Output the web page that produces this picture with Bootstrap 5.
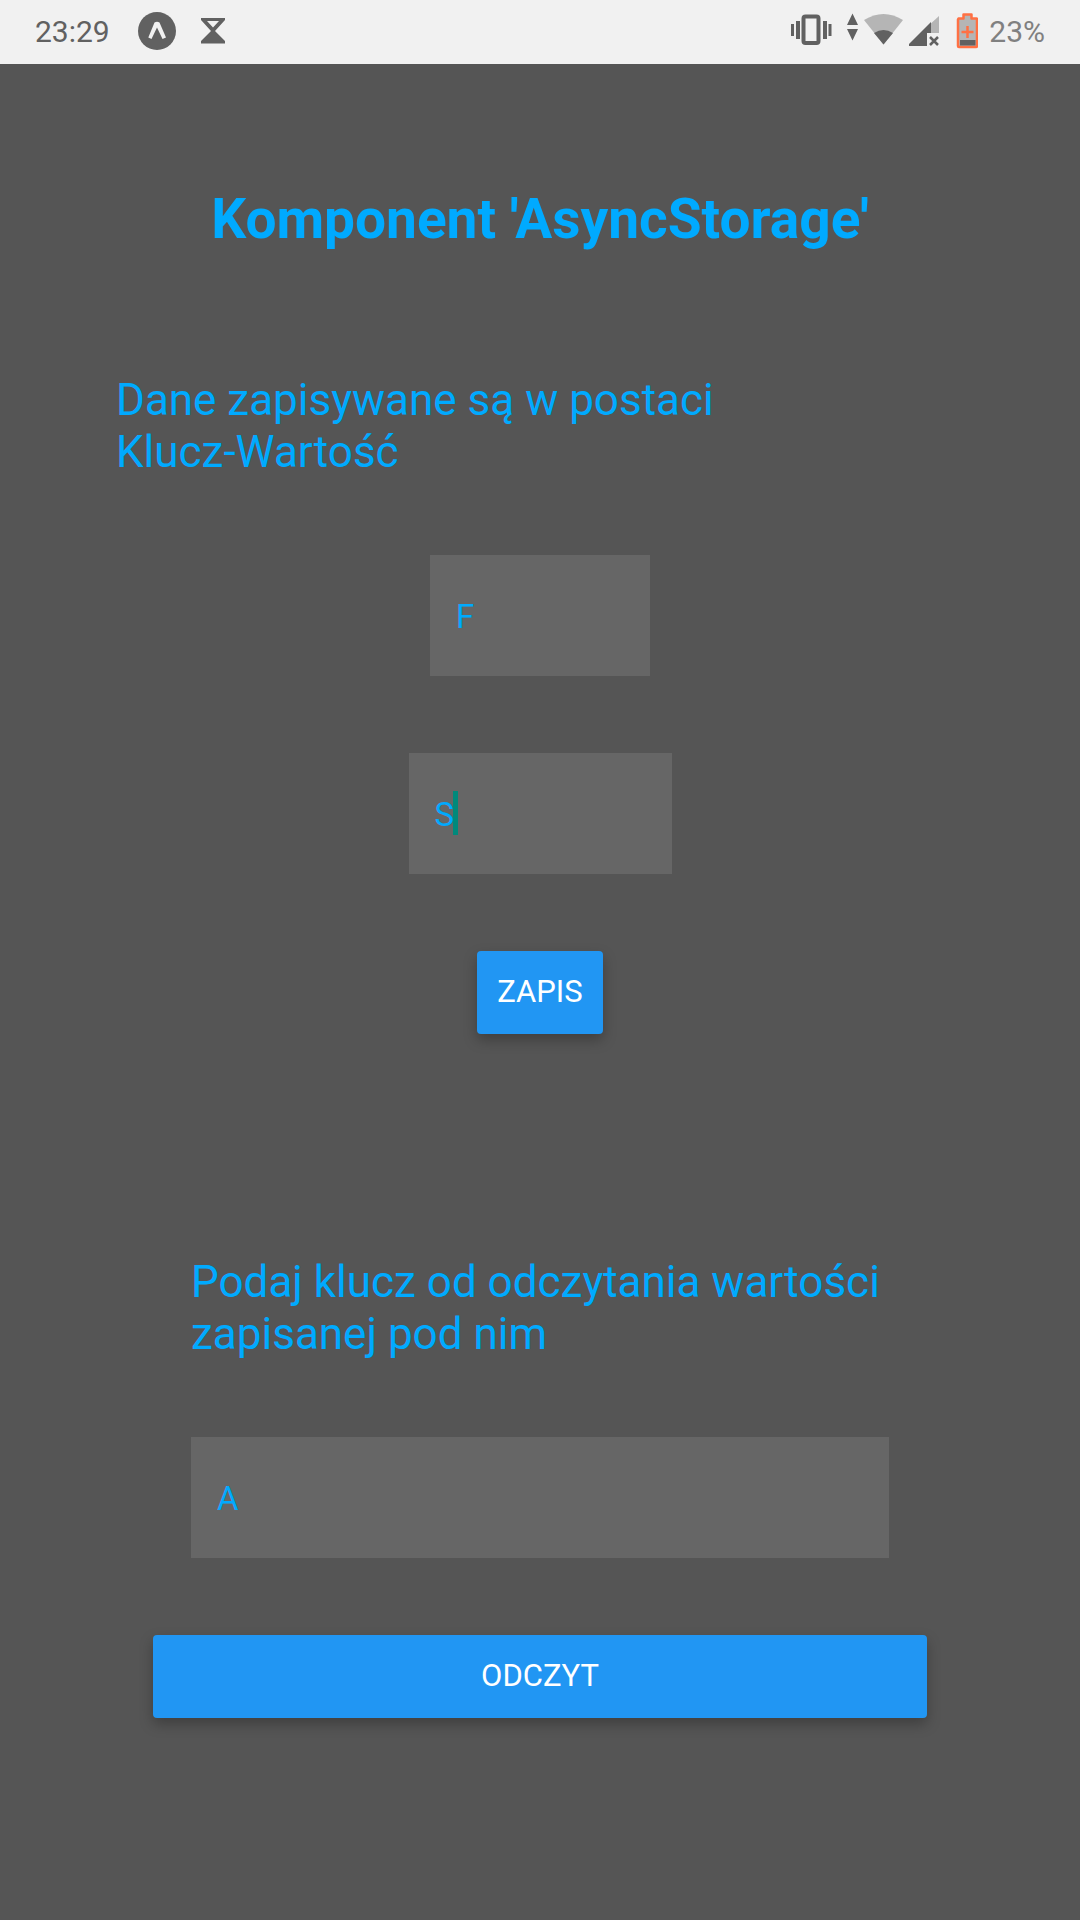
<!DOCTYPE html>
<html lang="pl">
<head>
<meta charset="utf-8">
<meta name="viewport" content="width=device-width, initial-scale=1">
<title>AsyncStorage</title>
<link href="https://cdn.jsdelivr.net/npm/bootstrap@5.3.0/dist/css/bootstrap.min.css" rel="stylesheet">
<style>
  body { background: #555; color: #0af; font-family: Roboto, sans-serif; font-size: 33px; }
  .status-bar { background: #f1f1f1; color: #616161; height: 64px; padding: 0 35px; font-size: 30px; line-height: 64px; }
  .status-bar svg { display: block; }
  .clock { font-weight: 400; }
  .charge { color: #808080; margin-left: 11px; }
  .screen { padding: 123px 24px 77px; }
  .screen-title { font-size: 55px; line-height: 64px; font-weight: 700; margin-bottom: 123px; }
  .hint-text { font-size: 44px; line-height: 52px; margin: 0; }
  .save-form { gap: 77px; max-width: 848px; }
  .read-form { gap: 77px; max-width: 774px; margin-top: 222px; }
  .read-fields { gap: 77px; padding: 0 38px; }
  .field-box { background: #666; color: #0af; border: 0; border-radius: 0; height: 121px; padding: 2px 26px 0; font-size: 33px; }
  .field-box:focus { background: #666; color: #0af; box-shadow: none; }
  .key-field { width: 220px; }
  .value-field { width: 263px; }
  .caret { left: 44px; top: 38px; width: 5px; height: 44px; background: #00897b; }
  .btn-material { --bs-btn-color: #fff; --bs-btn-bg: #2196f3; --bs-btn-hover-color: #fff; --bs-btn-hover-bg: #1e88e5; --bs-btn-border-width: 0;
    height: 83px; padding: 0 20px; border-radius: 4px; font-size: 31px; box-shadow: 0 6px 14px rgba(0,0,0,.27); }
</style>
<script src="https://cdn.jsdelivr.net/npm/bootstrap@5.3.0/dist/js/bootstrap.bundle.min.js"></script>
</head>
<body>
<header class="status-bar d-flex justify-content-between align-items-center">
  <div class="d-flex align-items-center">
    <span class="clock">23:29</span>
    <svg class="ms-4" width="43" height="64" viewBox="134 0 43 64" aria-hidden="true">
      <circle cx="157" cy="31" r="19" fill="#616161"/>
      <path d="M148.300 37.500L154.500 22.500Q157 21 159.500 22.500L166 37.500L162.500 39L157 27.500L151.500 39Z" fill="#f1f1f1"/>
    </svg>
    <svg class="ms-4" width="24" height="64" viewBox="201 0 24 64" aria-hidden="true">
      <path fill="#616161" fill-rule="evenodd" d="M201 18h24v2L215 31l10 10v2.500h-24V41l10-10-10-11zM207 21h12l-6 6.500z"/>
    </svg>
  </div>
  <div class="d-flex align-items-center">
    <svg width="188" height="64" viewBox="790 0 188 64" aria-hidden="true">
      <g fill="#616161">
        <path d="M791 24h3v12h-3zM796 21h4v18h-4zM823 21h4v18h-4zM828.500 24h3v12h-3z"/>
        <rect x="803.500" y="16.500" width="15" height="26.500" rx="2" fill="none" stroke="#616161" stroke-width="4"/>
        <path d="M852.500 13.500L858 25h-11zM847 29h11l-5.500 11.500z"/>
      </g>
      <path fill="#b5b5b5" d="M864 20Q883.500 8 903 20L883.500 44.500z"/>
      <path fill="#616161" d="M874 33Q883.500 27 893 33L883.500 44.500z"/>
      <path fill="#b5b5b5" d="M939 16v17h-12V27z"/>
      <path fill="#616161" d="M931 22v11h-4v13h-18v-2z"/>
      <path stroke="#616161" stroke-width="2.500" d="M930 37l8 8M938 37l-8 8"/>
      <path fill="#b5b5b5" stroke="#ff7043" stroke-width="2.500" stroke-linejoin="round" d="M958.500 18.500h5v-4h8v4h5q.5 0 .5 1V46q0 1-1 1h-17q-1 0-1-1V19.500z"/>
      <path fill="#616161" d="M960 40h15.500v5.500H960z"/>
      <path stroke="#ff7043" stroke-width="2.500" d="M967.500 26v12M961.500 32h12"/>
    </svg>
    <span class="charge">23%</span>
  </div>
</header>
<main class="screen">
  <h1 class="screen-title text-center">Komponent 'AsyncStorage'</h1>
  <form class="save-form d-flex flex-column align-items-center mx-auto">
    <p class="hint-text w-100">Dane zapisywane są w postaci<br>Klucz-Wartość</p>
    <input class="form-control field-box key-field" type="text" value="F" aria-label="Klucz">
    <div class="position-relative">
      <input class="form-control field-box value-field" type="text" value="S" aria-label="Wartość">
      <span class="caret position-absolute"></span>
    </div>
    <button class="btn btn-material" type="button">ZAPIS</button>
  </form>
  <form class="read-form d-flex flex-column mx-auto">
    <div class="read-fields d-flex flex-column">
      <label class="hint-text" for="readKey">Podaj klucz od odczytania wartości zapisanej pod nim</label>
      <input class="form-control field-box" type="text" id="readKey" value="A">
    </div>
    <button class="btn btn-material w-100" type="button">ODCZYT</button>
  </form>
</main>
</body>
</html>
